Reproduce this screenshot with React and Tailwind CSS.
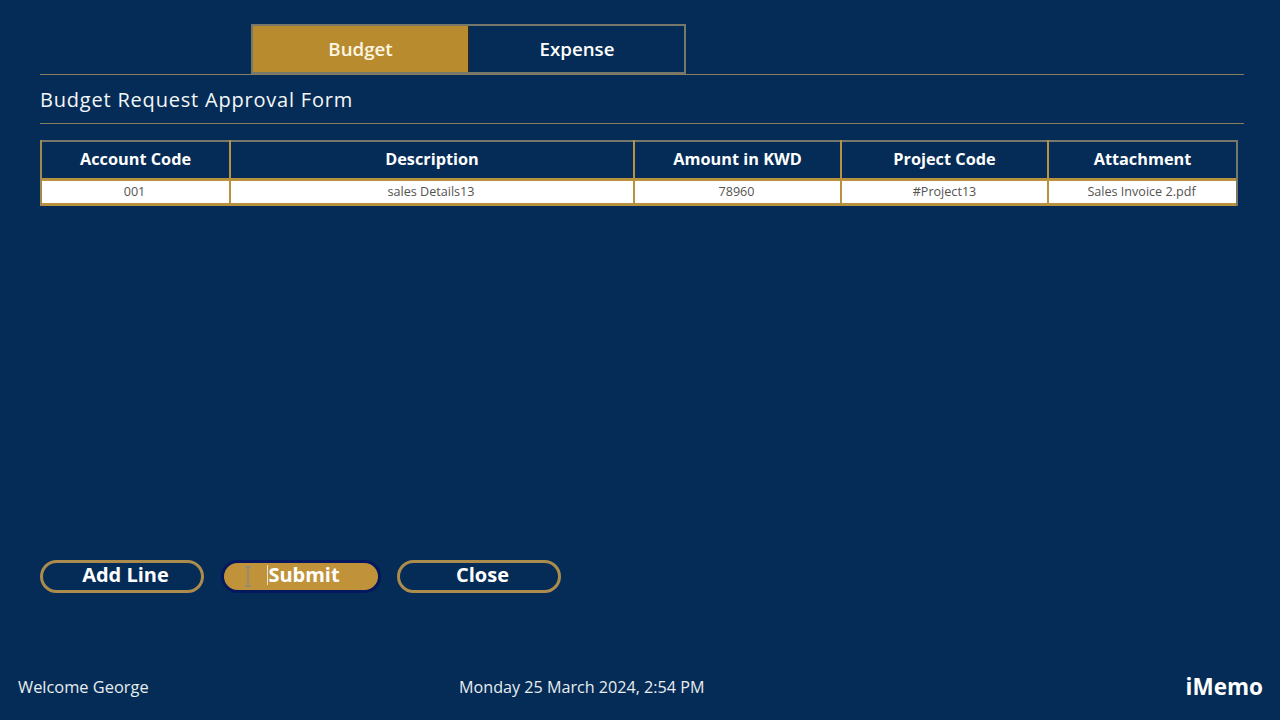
import React from "react";

const cols = [
  { head: "Account Code", cell: "001", w: "w-[189px]", cx: "pr-[2px]" },
  { head: "Description", cell: "sales Details13", w: "w-[404px]", cx: "pr-[2px]" },
  { head: "Amount in KWD", cell: "78960", w: "w-[207px]", cx: "pr-[2px]" },
  { head: "Project Code", cell: "#Project13", w: "w-[207px]", cx: "" },
  { head: "Attachment", cell: "Sales Invoice 2.pdf", w: "w-[191px]", cx: "pr-[2px]" },
];

export default function App() {
  return (
    <div className="w-[1280px] h-[720px] overflow-hidden bg-[#052c56] text-white flex flex-col font-['Open_Sans',sans-serif]">
      <div className="pt-[24px] pl-[40px] pr-[36px]">
        <div className="border-b border-[#857f60] pl-[211px] h-[50px] box-content">
          <div className="flex w-[435px] h-[50px] border-2 border-[#77776a]">
            <div className="w-[215px] bg-[#b88b2f] flex items-center justify-center text-[18.7px] font-semibold text-[#fdf6e4]">
              Budget
            </div>
            <div className="flex-1 flex items-center justify-center text-[18.7px] font-semibold border-l-2 border-[#1d2a33]">
              Expense
            </div>
          </div>
        </div>
        <div className="h-[49px] flex items-center pt-[1px] border-b border-[#857f60] text-[20px] tracking-[0.8px] text-[#f4f7f8]">
          Budget Request Approval Form
        </div>
      </div>

      <div className="mt-[16px] ml-[40px] w-[1198px] flex">
        {cols.map((c, i) => (
          <div key={c.head} className={`${c.w} flex flex-col border-l-2 ${i === 0 ? "border-l-[#a08a50]" : "border-l-[#b8923f]"} ${i === 4 ? "border-r-2 border-r-[#77776a]" : ""}`}>
            <div className="h-[41px] border-t-2 border-t-[#77776a] border-b-[3px] border-b-[#b8923f] flex items-center justify-center pb-[2px] text-[16.3px] font-bold">
              {c.head}
            </div>
            <div className={`h-[25px] bg-white border-b-[3px] border-b-[#b8923f] flex items-center justify-center pt-[1px] text-[12.6px] text-[#55534f] ${c.cx}`}>
              {c.cell}
            </div>
          </div>
        ))}
      </div>

      <div className="mt-[354px] ml-[40px] flex items-center">
        <button className="w-[164px] h-[33px] rounded-full border-[3px] border-[#ab8c4c] bg-[#052c56] pl-[7px] pb-[4px] text-[20px] leading-none font-bold flex items-center justify-center">
          Add Line
        </button>
        <div className="ml-[17px] w-[160px] h-[33px] rounded-full border-[3px] border-[#04185e] bg-[#c0923a] pl-[5px] pb-[3px] flex items-center justify-center relative">
          <span className="text-[20px] leading-none font-bold border-l border-[#e8e2d0]">Submit</span>
          <svg className="absolute left-[21px] top-[3px]" width="6" height="21" viewBox="0 0 6 21" fill="none" stroke="#8a8a80" strokeWidth="1.5">
            <path d="M0.5 1H5.5M3 1V20M0.5 20H5.5" />
          </svg>
        </div>
        <button className="ml-[16px] w-[164px] h-[33px] rounded-full border-[3px] border-[#ab8c4c] bg-[#052c56] pl-[7px] pb-[4px] text-[20px] leading-none font-bold flex items-center justify-center">
          Close
        </button>
      </div>

      <div className="mt-[80px] pl-[18px] pr-[17px] flex items-center h-[28px] text-[#e8edf0]">
        <span className="w-[441px] text-[16.4px]">Welcome George</span>
        <span className="text-[16.15px]">Monday 25 March 2024, 2:54 PM</span>
        <span className="ml-auto text-[22.5px] font-bold text-white">iMemo</span>
      </div>
    </div>
  );
}
